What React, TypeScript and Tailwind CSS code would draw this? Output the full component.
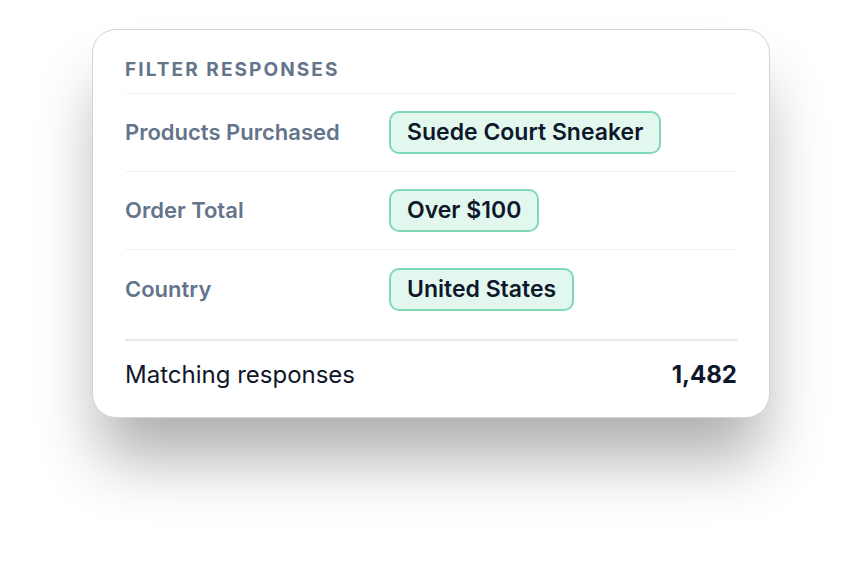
import React from "react";

const rows = [
  { label: "Products Purchased", value: "Suede Court Sneaker" },
  { label: "Order Total", value: "Over $100" },
  { label: "Country", value: "United States" },
];

export default function App() {
  return (
    <div
      className="min-h-[574px] w-[862px] bg-white pl-[92px] pt-[29px]"
      style={{ fontFamily: "Inter, 'Noto Sans', sans-serif" }}
    >
      <div className="w-[678px] rounded-[24px] border border-[#d4d4d4] bg-white px-[32px] shadow-[0_48px_64px_-8px_rgba(0,0,0,0.32)]">
        <div className="pt-[31px] pb-[14px] border-b border-[#eef1f5] text-[19px] leading-[18px] font-bold tracking-[0.11em] text-[#64748b]">
          FILTER RESPONSES
        </div>
        {rows.map((r, i) => (
          <div
            key={r.label}
            className={
              "flex h-[78px] items-center " +
              (i < rows.length - 1 ? "border-b border-[#eef1f5]" : "")
            }
          >
            <div className="w-[264px] shrink-0 text-[22px] font-semibold text-[#64748b]">
              {r.label}
            </div>
            <div className="flex h-[43px] items-center rounded-[10px] border-2 border-[#7fd8b6] bg-[#e2f7ee] px-[16px] text-[23px] font-semibold text-[#0f172a]">
              {r.value}
            </div>
          </div>
        ))}
        <div className="mt-[11px] flex items-center justify-between border-t-2 border-[#e5e9ef] pt-[20px] pb-[28px] text-[24px] leading-[28px] text-[#0f172a]">
          <span>Matching responses</span>
          <span className="font-bold">1,482</span>
        </div>
      </div>
    </div>
  );
}
